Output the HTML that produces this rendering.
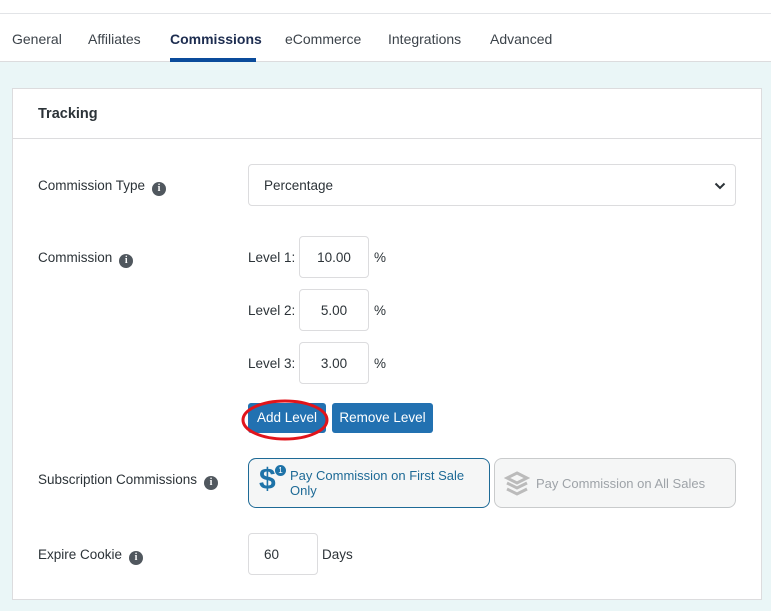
<!DOCTYPE html>
<html><head><style>
*{box-sizing:border-box;margin:0;padding:0}
body{width:771px;height:611px;background:#eaf6f7;font-family:"Liberation Sans",sans-serif;font-size:13.5px;color:#2c3338;position:relative;overflow:hidden}
.top{position:absolute;left:0;top:0;width:771px;height:62px;background:#fff;border-bottom:1px solid #dcdcde}
.topline{position:absolute;left:0;top:13px;width:771px;height:1px;background:#e2e4e7}
.tab{position:absolute;top:31px;font-size:14px;color:#3c434a}
.tab.act{font-weight:bold;color:#1d2d50}
.ul{position:absolute;left:170px;top:58px;width:86px;height:4px;background:#0a4b9b}
.card{position:absolute;left:12px;top:88px;width:750px;height:512px;background:#fff;border:1px solid #dcdcde}
.hdr{position:absolute;left:0;top:0;width:748px;height:50px;border-bottom:1px solid #dcdcde}
.hdr b{position:absolute;left:25px;top:17px;font-size:14.5px;color:#2c3338}
.lbl{position:absolute;left:38px;font-size:13.5px}
.i{display:inline-block;width:14px;height:14px;border-radius:50%;background:#50575e;color:#fff;font-size:10px;font-weight:bold;text-align:center;line-height:14px;vertical-align:-1px;margin-left:7px;font-family:"Liberation Serif",serif}
.inp{position:absolute;border:1px solid #dcdcde;border-radius:4px;background:#fff;font-size:13.5px}
.lv{position:absolute;left:248px;font-size:13.5px}
.btn{position:absolute;top:403px;height:30px;background:#2271b1;color:#fff;border-radius:3px;font-size:13.5px;line-height:30px;text-align:center}
.opt{position:absolute;top:458px;height:50px;border-radius:8px;background:#f5f6f6;font-size:13px}
</style></head><body>
<div class="top"></div><div class="topline"></div>
<div class="tab" style="left:12px">General</div>
<div class="tab" style="left:88px">Affiliates</div>
<div class="tab act" style="left:170px">Commissions</div>
<div class="tab" style="left:285px">eCommerce</div>
<div class="tab" style="left:388px">Integrations</div>
<div class="tab" style="left:490px">Advanced</div>
<div class="ul"></div>
<div class="card"><div class="hdr"><b>Tracking</b></div></div>
<div class="lbl" style="top:178px">Commission Type<span class="i">i</span></div>
<div class="inp" style="left:248px;top:164px;width:488px;height:42px;padding:13px 0 0 15px">Percentage
<svg style="position:absolute;right:9px;top:17px" width="12" height="8" viewBox="0 0 12 8"><path d="M1.5 1.5L6 6l4.5-4.5" fill="none" stroke="#2c3338" stroke-width="2"/></svg></div>
<div class="lbl" style="top:250px">Commission<span class="i">i</span></div>
<div class="lv" style="top:250px">Level 1:</div>
<div class="inp" style="left:299px;top:236px;width:70px;height:42px;padding-top:13px;text-align:center">10.00</div>
<div class="lv" style="left:374px;top:250px">%</div>
<div class="lv" style="top:303px">Level 2:</div>
<div class="inp" style="left:299px;top:289px;width:70px;height:42px;padding-top:13px;text-align:center">5.00</div>
<div class="lv" style="left:374px;top:303px">%</div>
<div class="lv" style="top:356px">Level 3:</div>
<div class="inp" style="left:299px;top:342px;width:70px;height:42px;padding-top:13px;text-align:center">3.00</div>
<div class="lv" style="left:374px;top:356px">%</div>
<div class="btn" style="left:248px;width:78px">Add Level</div>
<div class="btn" style="left:332px;width:101px">Remove Level</div>
<svg style="position:absolute;left:240px;top:398px" width="92" height="46"><ellipse cx="45" cy="22" rx="42" ry="19" fill="none" stroke="#e1141b" stroke-width="3"/></svg>
<div class="lbl" style="top:472px">Subscription Commissions<span class="i">i</span></div>
<div class="opt" style="left:248px;width:242px;border:1px solid #1e6a96;color:#1e6a96">
<div style="position:absolute;left:10px;top:4px;font-size:30px;font-weight:bold;color:#1e73a8">$</div>
<div style="position:absolute;left:26px;top:6px;width:11px;height:11px;border-radius:50%;background:#1e73a8;color:#fff;font-size:8px;text-align:center;line-height:11px">1</div>
<div style="position:absolute;left:41px;top:9px;line-height:15px">Pay Commission on First Sale<br>Only</div></div>
<div class="opt" style="left:494px;width:242px;border:1px solid #c9cbcc;color:#9ea3a8">
<svg style="position:absolute;left:9px;top:11px" width="26" height="28" viewBox="0 0 26 28"><g fill="none" stroke="#bbb" stroke-width="3"><path d="M13 3l10 5-10 5-10-5z"/><path d="M3 13l10 5 10-5"/><path d="M3 19l10 5 10-5"/></g></svg>
<div style="position:absolute;left:41px;top:17px">Pay Commission on All Sales</div></div>
<div class="lbl" style="top:547px">Expire Cookie<span class="i">i</span></div>
<div class="inp" style="left:248px;top:533px;width:70px;height:42px;padding:13px 0 0 15px">60</div>
<div class="lv" style="left:322px;top:547px">Days</div>
</body></html>
